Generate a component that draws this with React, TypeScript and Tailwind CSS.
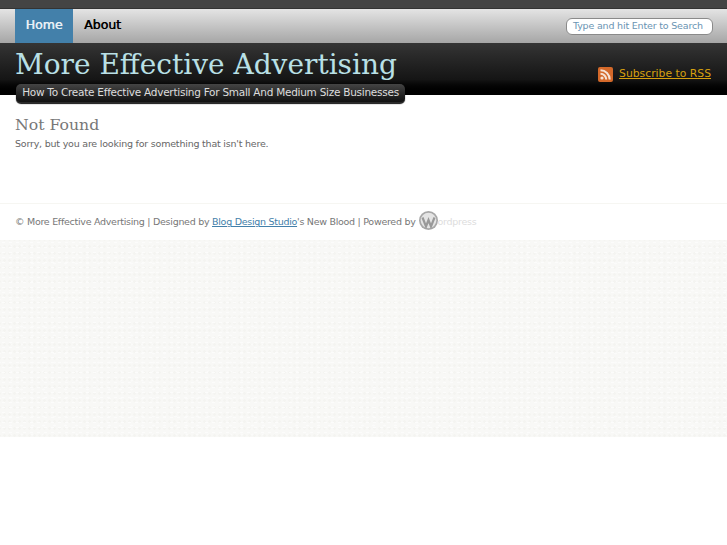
export default function App() {
  return (
    <div className="min-h-[545px] bg-white font-['DejaVu_Sans',sans-serif] overflow-hidden">
      {/* top strip */}
      <div className="h-[9px] bg-[#444444] border-b border-[#333333]" />

      {/* nav */}
      <nav className="h-[34px] pl-[15px] pr-[14px] flex items-center justify-between bg-gradient-to-b from-[#e4e4e4] to-[#a6a6a6]">
        <div className="flex h-full">
          <a className="w-[58px] pb-[2px] flex items-center justify-center bg-[#4380aa] text-[12.5px] font-medium text-[#e8f0f5] [text-shadow:0.4px_0_0_#e8f0f5]">Home</a>
          <a className="ml-[11px] pb-[2px] flex items-center text-[12.5px] font-medium text-black [text-shadow:0.4px_0_0_#000000]">About</a>
        </div>
        <div className="w-[147px] h-[17px] rounded-[6px] border border-[#8a8a8a] bg-white pl-[6px] pt-[1px] flex items-center text-[9.5px] tracking-[-0.18px] whitespace-nowrap text-[#6a94b3]">
          Type and hit Enter to Search
        </div>
      </nav>

      {/* header */}
      <header className="h-[52px] pl-[15px] pr-[16px] flex justify-between bg-gradient-to-b from-[#353535] via-[#151515] via-70% to-black">
        <div>
          <h1 className="font-['DejaVu_Serif',serif] text-[28px] leading-[42px] pt-[1px] h-[42px] whitespace-nowrap text-[#b9e0e6]">More Effective Advertising</h1>
          <div className="relative z-10 ml-[1px] -mt-[1px] w-[389px] h-[20px] rounded-[5px] bg-gradient-to-b from-[#444444] to-[#111111] border-b-2 border-[#2a2a2a] text-center text-[10.5px] tracking-[-0.26px] leading-[16px] whitespace-nowrap text-[#dddddd] shadow-[0_0_1px_#000000]">
            How To Create Effective Advertising For Small And Medium Size Businesses
          </div>
        </div>
        <div className="mt-[23px] flex h-[17px] items-center gap-[6px]">
          <svg width="15" height="15" viewBox="0 0 15 15">
            <rect width="15" height="15" rx="2" fill="#d4692a" />
            <circle cx="4" cy="11" r="1.6" fill="#f6e3d5" />
            <path d="M2.5 6.8a5.7 5.7 0 0 1 5.7 5.7M2.5 3.3a9.2 9.2 0 0 1 9.2 9.2" fill="none" stroke="#f6e3d5" strokeWidth="2" />
          </svg>
          <a className="text-[10.8px] text-[#d7a10f] underline">Subscribe to RSS</a>
        </div>
      </header>

      {/* content */}
      <main className="h-[108px] px-[15px] pt-[20px]">
        <h2 className="font-['DejaVu_Serif',serif] text-[15.7px] leading-[20px] text-[#777777]">Not Found</h2>
        <p className="mt-[1px] text-[9.5px] tracking-[-0.21px] leading-[16px] text-[#666666]">Sorry, but you are looking for something that isn't here.</p>
      </main>

      {/* footer */}
      <footer className="h-[37px] px-[15px] flex items-center border-t border-[#f6f6f2] text-[9.5px] tracking-[-0.28px] text-[#777777]">
        <span className="pt-[1px]">© More Effective Advertising | Designed by <a className="text-[#4380aa] underline">Blog Design Studio</a>'s New Blood | Powered by</span>
        <svg className="ml-[3px] -mt-[3px]" width="19" height="19" viewBox="0 0 19 19">
          <circle cx="9.5" cy="9.5" r="9.5" fill="#a8a8a8" />
          <circle cx="9.5" cy="9.5" r="7.8" fill="#e4e4e4" />
          <path d="M3.5 6.5 7 15.5 9.5 9 12 15.5 15.5 6.5" fill="none" stroke="#999999" strokeWidth="2.2" />
        </svg>
        <span className="text-[#dddddd] pt-[1px]">ordpress</span>
      </footer>

      {/* textured band */}
      <div className="h-[197px] bg-[#f8f8f6] bg-[radial-gradient(#fcfcfb_1px,transparent_1.5px),radial-gradient(#f4f4f1_1px,transparent_1.5px),radial-gradient(#fbfbfa_1px,transparent_1.5px)] bg-[length:7px_5px,5px_7px,11px_9px] bg-[position:0_0,2px_3px,5px_1px]" />
    </div>
  )
}
